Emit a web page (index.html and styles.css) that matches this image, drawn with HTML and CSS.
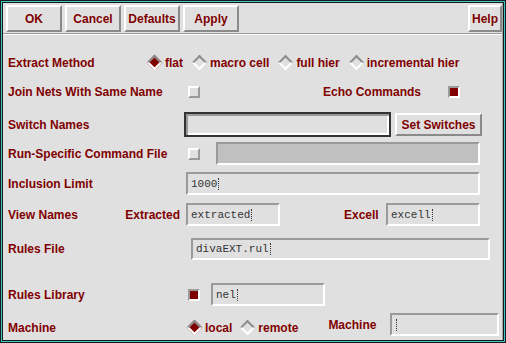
FILE: index.html
```html
<!DOCTYPE html>
<html lang="en">
<head>
    <meta charset="UTF-8">
    <title>Extractor Options</title>
    <link rel="stylesheet" href="styles.css">
</head>
<body>
    <div class="window">
        <div class="panel">
            <div class="toolbar">
                <button class="btn">OK</button>
                <button class="btn">Cancel</button>
                <button class="btn">Defaults</button>
                <button class="btn">Apply</button>
                <button class="btn btn-help">Help</button>
            </div>

            <div class="form">
                <!-- Extract method -->
                <div class="row row-method">
                    <span class="label label-method">Extract Method</span>
                    <span class="choice"><span class="diamond on"></span><span class="opt">flat</span></span>
                    <span class="choice"><span class="diamond"></span><span class="opt">macro cell</span></span>
                    <span class="choice"><span class="diamond"></span><span class="opt">full hier</span></span>
                    <span class="choice"><span class="diamond"></span><span class="opt">incremental hier</span></span>
                </div>

                <div class="row row-join">
                    <span class="label">Join Nets With Same Name</span>
                    <span class="check check-first"></span>
                    <span class="echo">Echo Commands</span>
                    <span class="check on check-echo"></span>
                </div>

                <div class="row row-switch">
                    <span class="label">Switch Names</span>
                    <div class="field field-switch"></div>
                    <button class="btn btn-set">Set Switches</button>
                </div>

                <div class="row row-run">
                    <span class="label">Run-Specific Command File</span>
                    <span class="check check-first"></span>
                    <div class="field field-run"></div>
                </div>

                <div class="row row-limit">
                    <span class="label">Inclusion Limit</span>
                    <div class="field field-limit">1000<span class="caret"></span></div>
                </div>

                <div class="row row-view">
                    <span class="label label-view">View Names</span>
                    <span class="sub sub-extracted">Extracted</span>
                    <div class="field field-view">extracted<span class="caret"></span></div>
                    <span class="sub sub-excell">Excell</span>
                    <div class="field field-view field-excell">excell<span class="caret"></span></div>
                </div>

                <div class="row row-rules">
                    <span class="label">Rules File</span>
                    <div class="field field-rules">divaEXT.rul<span class="caret"></span></div>
                </div>

                <div class="row row-lib">
                    <span class="label">Rules Library</span>
                    <span class="check on check-first"></span>
                    <div class="field field-lib">nel<span class="caret"></span></div>
                </div>

                <div class="row row-machine">
                    <span class="label">Machine</span>
                    <span class="choice choice-local"><span class="diamond on"></span><span class="opt">local</span></span>
                    <span class="choice choice-remote"><span class="diamond"></span><span class="opt">remote</span></span>
                    <span class="sub sub-machine">Machine</span>
                    <div class="field field-machine"><span class="caret"></span></div>
                </div>
            </div>
        </div>
    </div>
</body>
</html>
```

FILE: styles.css
```css
body {
    margin: 0;
    background: #e0e0e0;
}
.window {
    width: 506px;
    height: 343px;
    box-sizing: border-box;
    border: 1px solid #1a1a1a;
    box-shadow: inset 0 0 0 1px #3cc8c8, inset 0 0 0 2px #1a1a1a;
    padding: 2px;
    background: #e0e0e0;
    font-family: "Liberation Sans", Arial, sans-serif;
    font-weight: bold;
    font-size: 12px;
    color: #800000;
}
.panel {
    height: 100%;
    border-right: 1px solid #a8a8a8;
}
.toolbar {
    display: flex;
    gap: 3px;
    height: 31px;
    box-sizing: border-box;
    padding: 2px 0 0 3px;
    border-bottom: 1px solid #9a9a9a;
    box-shadow: 0 1px 0 #fff;
}
.btn {
    width: 56px;
    height: 27px;
    box-sizing: border-box;
    padding: 0;
    border: 2px solid;
    border-color: #fff #8a8a8a #8a8a8a #fff;
    background: #e0e0e0;
    font: inherit;
    color: #800000;
}
.btn-help {
    width: 34px;
    margin-left: auto;
}
.form {
    padding-left: 5px;
}
.row {
    display: flex;
    align-items: center;
    height: 23px;
    white-space: nowrap;
}
.label {
    flex: none;
    width: 178px;
}
.label-method {
    width: 139px;
}
.label-view {
    width: 116px;
}

/* row spacing */
.row-method { margin-top: 18px; height: 21px; }
.row-join { margin-top: 9px; height: 20px; }
.row-switch { margin-top: 10px; height: 25px; }
.row-run { margin-top: 5px; }
.row-limit { margin-top: 7px; }
.row-view { margin-top: 8px; }
.row-rules { margin-top: 12px; height: 22px; }
.row-lib { margin-top: 23px; }
.row-machine { margin-top: 7px; }
.row-machine .label,
.row-machine .choice {
    margin-top: 6px;
}

/* radio diamonds */
.choice {
    display: flex;
    align-items: center;
    margin-right: 9px;
}
.choice-local {
    margin-left: 1px;
    margin-right: 8px;
}
.choice-remote {
    margin-right: 0;
}
.diamond {
    flex: none;
    width: 11px;
    height: 11px;
    margin: 2px;
    box-sizing: border-box;
    border: 2px solid;
    border-color: #8c8c8c #fff #fff #8c8c8c;
    transform: rotate(45deg);
}
.diamond.on {
    background: #800000;
}
.opt {
    margin-left: 3px;
}

/* toggles */
.check {
    flex: none;
    width: 12px;
    height: 12px;
    box-sizing: border-box;
    border: 2px solid;
    border-color: #fff #9a9a9a #9a9a9a #fff;
}
.check.on {
    border-color: #9a9a9a #fff #fff #9a9a9a;
    background: #800000;
}
.check-first {
    margin-left: 2px;
}
.echo {
    margin-left: 123px;
}
.check-echo {
    margin-left: 27px;
}

/* text fields */
.field {
    flex: none;
    display: flex;
    align-items: center;
    height: 23px;
    box-sizing: border-box;
    padding-left: 3px;
    border: 2px solid;
    border-color: #9a9a9a #fff #fff #9a9a9a;
    background: #e0e0e0;
    font-family: "Liberation Mono", "Courier New", monospace;
    font-weight: normal;
    font-size: 11px;
    color: #333;
}
.field-switch {
    width: 207px;
    height: 25px;
    margin-left: -2px;
    border-color: #333;
    box-shadow: inset 2px 2px 0 #9a9a9a, inset -2px -2px 0 #fff;
}
.btn-set {
    width: 87px;
    height: 23px;
    margin-left: 4px;
}
.field-run {
    width: 264px;
    margin-left: 16px;
    background: #c0c0c0;
}
.field-limit {
    width: 294px;
}
.sub {
    flex: none;
    text-align: right;
}
.sub-extracted {
    width: 56px;
    margin-right: 6px;
}
.field-view {
    width: 94px;
}
.sub-excell {
    width: 33px;
    margin-left: 64px;
    margin-right: 9px;
}
.field-rules {
    width: 299px;
    height: 22px;
    margin-left: 5px;
}
.field-lib {
    width: 114px;
    margin-left: 11px;
}
.sub-machine {
    width: 48px;
    margin-left: 30px;
    text-align: left;
}
.field-machine {
    width: 109px;
    margin-left: 14px;
}
.caret {
    display: inline-block;
    width: 0;
    height: 12px;
    margin-left: 1px;
    border-left: 1px dotted #333;
}
```
